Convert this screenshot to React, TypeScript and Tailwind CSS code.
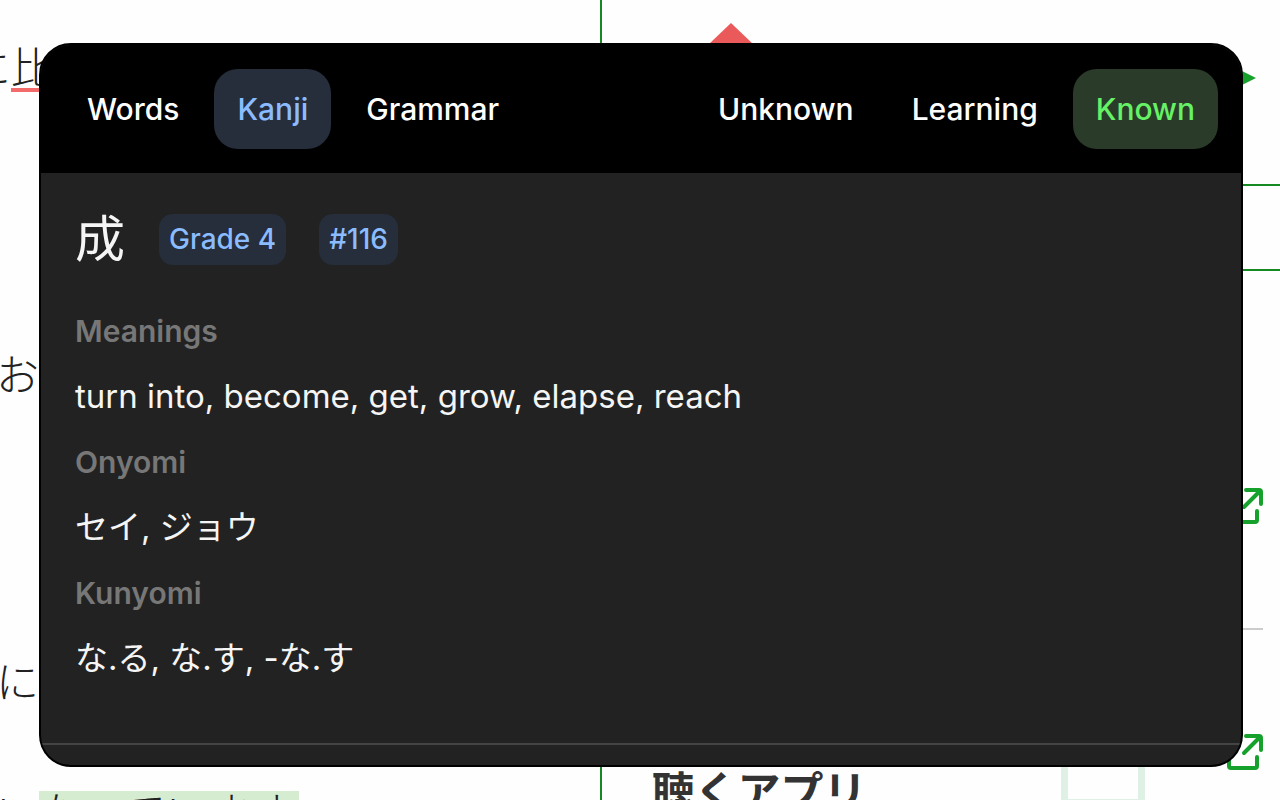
import clsx from "clsx";
import { useState } from "react";

const tabs = ["Words", "Kanji", "Grammar"];
const statuses = ["Unknown", "Learning", "Known"];

const readings = [
  { label: "Meanings", value: "turn into, become, get, grow, elapse, reach" },
  { label: "Onyomi", value: "セイ, ジョウ" },
  { label: "Kunyomi", value: "な.る, な.す, -な.す" },
];

function OpenIcon() {
  return (
    <svg viewBox="0 0 36 36" className="h-9 w-9" fill="none" stroke="#16a02c" strokeWidth="4" strokeLinecap="round" strokeLinejoin="round">
      <path d="M9 7H4a2 2 0 0 0-2 2v23a2 2 0 0 0 2 2h24a2 2 0 0 0 2-2V23" />
      <path d="M19 2h13a2 2 0 0 1 2 2v12M32 4 17 19" />
    </svg>
  );
}

function OpenLink({ label }: { label: string }) {
  return (
    <a href="#" aria-label={label}>
      <OpenIcon />
    </a>
  );
}

// The page being read, mostly hidden behind the popup
function Article() {
  return (
    <div className="flex min-h-screen text-[43px] leading-[52px] text-[#222]">
      <div className="w-[47%] shrink-0 overflow-hidden whitespace-nowrap border-r-2 border-[#168a22] pt-[42px] font-light">
        <p className="-ml-8">
          に<span className="underline decoration-[#f26a6a] decoration-4 underline-offset-4">比べて</span>
        </p>
        <p className="-ml-1 pt-[255px]">お</p>
        <p className="-ml-1 pt-[255px]">に</p>
        <p className="-ml-1 flex pt-[83px] leading-11">
          い<mark className="bg-[#d6ecd0] pr-1 text-inherit">なっています</mark>
        </p>
      </div>

      <div className="min-w-0 flex-1">
        <div className="flex h-[184px] items-start justify-between pl-[107px] pr-6 pt-[23px]">
          <svg viewBox="0 0 44 44" className="h-11 w-11" fill="#eb5a5a">
            <path d="M22 0 44 21 22 42 0 21z" />
          </svg>
          <svg viewBox="0 0 24 24" className="mt-[43px] h-6 w-6" fill="#16a02c">
            <path d="M0 0 24 12 0 24z" />
          </svg>
        </div>
        <div className="h-[87px] border-y-2 border-[#168a22]" />
        <div className="mr-[17px] flex h-[359px] justify-end border-b-2 border-[#ccc] pt-[217px]">
          <OpenLink label="Open article" />
        </div>
        <div className="flex items-start pl-[50px] pr-[17px] pt-[104px]">
          <h2 className="flex-1 pt-8 font-bold text-[#333]">聴くアプリ</h2>
          <div className="h-[72px] w-[84px] border-7 border-[#dff0e4]" />
          <div className="ml-[82px]">
            <OpenLink label="Open app" />
          </div>
        </div>
      </div>
    </div>
  );
}

export default function App() {
  const [tab, setTab] = useState("Kanji");
  const [status, setStatus] = useState("Known");

  return (
    <div className="relative h-screen overflow-hidden bg-[#fefefe] font-['Inter','Noto_Sans_CJK_JP',sans-serif]" lang="ja">
      <Article />

      <div
        role="dialog"
        aria-label="Dictionary"
        className="absolute left-[39px] right-[37px] top-[43px] overflow-hidden rounded-[32px] border-2 border-black bg-[#222] text-[#f5f5f5]"
      >
        <div className="flex justify-between bg-black px-[23px] py-6 text-[30px] font-medium">
          <div className="flex gap-3">
            {tabs.map((name) => (
              <button
                key={name}
                onClick={() => setTab(name)}
                className={clsx("h-20 rounded-3xl px-[23px]", tab === name ? "bg-[#262d3b] text-[#8abcff]" : "text-white")}
              >
                {name}
              </button>
            ))}
          </div>
          <div className="flex gap-3">
            {statuses.map((name) => (
              <button
                key={name}
                onClick={() => setStatus(name)}
                className={clsx("h-20 rounded-3xl px-[23px]", status === name ? "bg-[#2a3c29] text-[#66f266]" : "text-white")}
              >
                {name}
              </button>
            ))}
          </div>
        </div>

        <div className="px-[34px] pb-[42px] pt-8">
          <div className="flex items-center">
            <h1 className="text-[50px] leading-[68px]">成</h1>
            <div className="ml-[34px] flex gap-[33px] text-[28px] leading-[51px] font-medium text-[#8abcff]">
              <span className="rounded-[14px] bg-[#262d3b] px-[10px]">Grade 4</span>
              <span className="rounded-[14px] bg-[#262d3b] px-[10px]">#116</span>
            </div>
          </div>
          <dl className="pt-[35px]">
            {readings.map((item) => (
              <div key={item.label} className="h-[131px]">
                <dt className="text-[30px] leading-[46px] font-semibold text-[#777]">{item.label}</dt>
                <dd className="pt-4 text-[33px] leading-[52px]">{item.value}</dd>
              </div>
            ))}
          </dl>
        </div>
        <div className="h-[22px] border-t-2 border-[#444]" />
      </div>
    </div>
  );
}
